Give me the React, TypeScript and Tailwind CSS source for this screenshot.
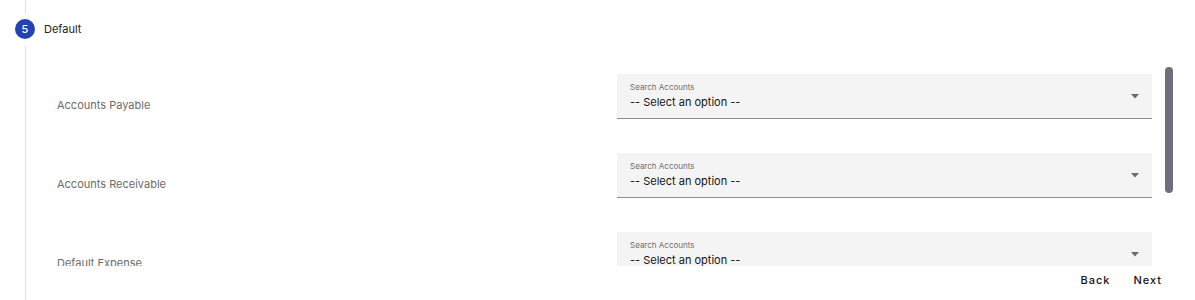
import React from "react";

const rows = ["Accounts Payable", "Accounts Receivable", "Default Expense"];

function Caret() {
  return (
    <svg width="8" height="5" viewBox="0 0 8 5" className="shrink-0">
      <path d="M0 0 L8 0 L4 4.5 Z" fill="#6b6b6b" />
    </svg>
  );
}

export default function App() {
  return (
    <div className="relative w-[1195px] h-[300px] overflow-hidden bg-white font-['Inter','Noto_Sans',sans-serif]">
      <div className="ml-[25px] h-[14px] w-px bg-[#e0e0e0]" />
      <div className="mt-[5px] flex h-[20px] items-center gap-[9px] pl-[15px]">
        <div className="flex h-[20px] w-[20px] items-center justify-center rounded-full bg-[#2443b3] text-[11px] font-medium text-white">
          5
        </div>
        <span className="text-[11px] text-[#222]">Default</span>
      </div>
      <div className="mt-[6px] ml-[25px] flex h-[255px] flex-col border-l border-[#e0e0e0]">
        <div className="relative h-[221px] overflow-hidden pt-[29px] pl-[31px] pr-[43px]">
          <div className="flex flex-col gap-[34px]">
            {rows.map((r) => (
              <div key={r} className="flex items-start">
                <div className="flex-1 pt-[23px] text-[11px] leading-[16px] text-[#6b6b6b]">{r}</div>
                <div className="flex h-[45px] w-[535px] items-center border-b border-[#8d8d8d] bg-[#f4f4f4] pl-[13px] pr-[13px]">
                  <div className="flex flex-1 flex-col">
                    <span className="text-[8px] leading-[10px] text-[#6f6f6f]">Search Accounts</span>
                    <span className="mt-[2px] text-[11px] leading-[16px] text-[#161616]">-- Select an option --</span>
                  </div>
                  <Caret />
                </div>
              </div>
            ))}
          </div>
          <div className="absolute right-[22px] top-[22px] h-[126px] w-[8px] rounded-full bg-[#6f6d7e]" />
        </div>
        <div className="flex flex-1 items-center justify-end gap-[11px] pr-[27px] pb-[6px]">
          <button className="px-[6px] text-[11px] font-medium tracking-[0.09em] text-[#161616]">Back</button>
          <button className="px-[6px] text-[11px] font-medium tracking-[0.09em] text-[#161616]">Next</button>
        </div>
      </div>
    </div>
  );
}
